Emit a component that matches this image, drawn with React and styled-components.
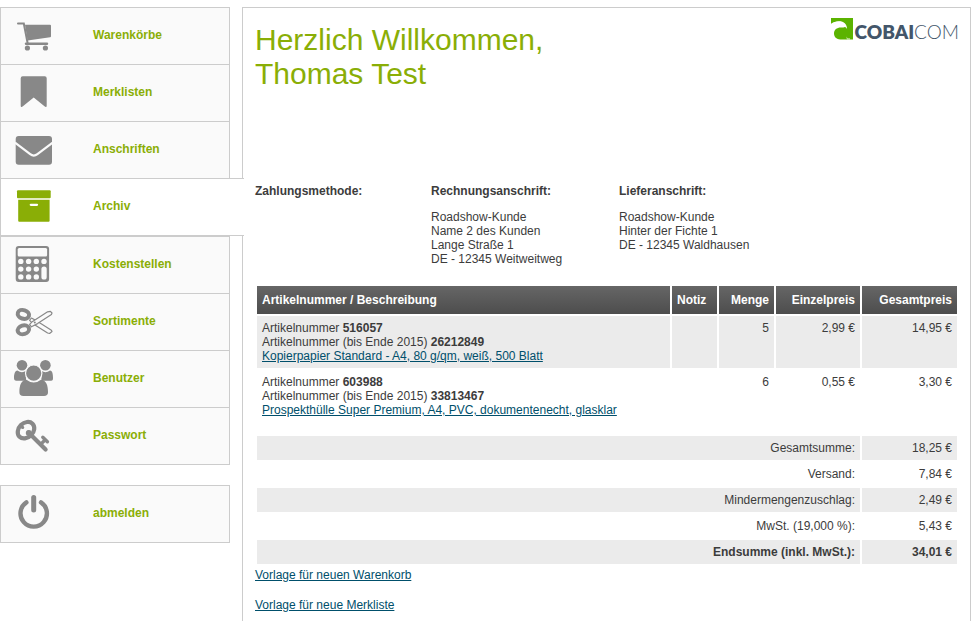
import React from "react";
import styled, { createGlobalStyle, css, ThemeProvider } from "styled-components";

const theme = {
  colors: {
    green: "#8aae06",
    icon: "#888888",
    border: "#cccccc",
    bg: "#ffffff",
    bgItem: "#fafafa",
    bgRow: "#ebebeb",
    text: "#3c3c3c",
    link: "#004f6b",
    logoGreen: "#5bb300",
    logoText: "#43566a"
  }
};

const GlobalStyle = createGlobalStyle`
  *,
  *::before,
  *::after {
    box-sizing: border-box;
  }

  body {
    background: #ffffff;
    color: ${theme.colors.text};
    font: 12px/14px "Liberation Sans", Arial, Helvetica, sans-serif;
    margin: 0;
  }
`;

const Page = styled.div`
  display: flex;
  gap: 12px;
  min-height: 100vh;
  padding: 7px 8px 0 0;
`;

const Sidebar = styled.nav`
  flex: 0 0 230px;
`;

const NavList = styled.ul`
  list-style: none;
  margin: 0 0 20px;
  padding: 0;
`;

const NavItem = styled.li`
  &:not(:first-child) {
    margin-top: ${({ $afterActive }) => ($afterActive ? "0" : "-1px")};
  }
`;

const NavLink = styled.a`
  align-items: center;
  background: ${({ theme }) => theme.colors.bgItem};
  border: 1px solid ${({ theme }) => theme.colors.border};
  color: ${({ theme }) => theme.colors.green};
  display: flex;
  font-weight: bold;
  gap: 40px;
  padding: 7px 12px 9px;
  text-decoration: none;

  svg {
    color: ${({ theme }) => theme.colors.icon};
    flex: none;
  }

  ${({ $active, theme }) =>
    $active &&
    css`
      background: ${theme.colors.bg};
      border-right: none;
      margin-right: -14px;
      position: relative;

      svg {
        color: ${theme.colors.green};
      }
    `}
`;

const Panel = styled.main`
  border: 1px solid ${({ theme }) => theme.colors.border};
  border-bottom: none;
  flex: 1;
  min-width: 0;
  padding: 10px 11px 9px 12px;
`;

const Header = styled.header`
  display: flex;
  justify-content: space-between;
  min-height: 166px;
`;

const Title = styled.h1`
  color: ${({ theme }) => theme.colors.green};
  font-size: 30px;
  font-weight: normal;
  line-height: 34px;
  margin: 5px 0 0;
`;

const Logo = styled.a`
  align-items: flex-start;
  align-self: flex-start;
  color: ${({ theme }) => theme.colors.logoText};
  display: flex;
  font-family: Lato, sans-serif;
  font-size: 19px;
  font-weight: 300;
  gap: 2px;
  line-height: 22px;
  text-decoration: none;

  svg {
    color: ${({ theme }) => theme.colors.logoGreen};
  }

  strong {
    font-weight: 800;
  }

  span {
    padding-top: 3px;
  }
`;

const Addresses = styled.section`
  display: grid;
  grid-template-columns: 44fr 47fr 85fr;
  min-height: 100px;
`;

const AddressTitle = styled.h2`
  font-size: 12px;
  line-height: 14px;
  margin: 0 0 12px;
`;

const AddressText = styled.address`
  font-style: normal;
`;

const Table = styled.table`
  border-collapse: separate;
  border-spacing: 2px;
  table-layout: fixed;
  width: 100%;
`;

const Col = styled.col`
  width: ${({ $width }) => $width || "auto"};
`;

const Th = styled.th`
  background: linear-gradient(#666666, #4d4d4d);
  color: #ffffff;
  padding: 7px 5px;
  text-align: ${({ $align }) => $align || "left"};
`;

const Td = styled.td`
  padding: 5px;
  text-align: ${({ $align }) => $align || "left"};
  vertical-align: top;
`;

const Tr = styled.tr`
  font-weight: ${({ $strong }) => ($strong ? "bold" : "normal")};

  ${Td} {
    background: ${({ $shaded, theme }) => ($shaded ? theme.colors.bgRow : "transparent")};
  }
`;

const Link = styled.a`
  color: ${({ theme }) => theme.colors.link};
`;

const Actions = styled.div`
  align-items: flex-start;
  display: flex;
  flex-direction: column;
  gap: 16px;
  padding-top: 2px;
`;

const Icon = ({ children }) => (
  <svg width="40" height="40" viewBox="0 0 40 40" fill="currentColor" aria-hidden="true">
    {children}
  </svg>
);

const CartIcon = () => (
  <Icon>
    <path d="M5 8.5H10.8L14.8 29" fill="none" stroke="currentColor" strokeWidth="2" strokeLinecap="round" />
    <path d="M12 9.7H37a1 1 0 0 1 1 1V21.3a1 1 0 0 1-.9 1L14.6 25.4Z" />
    <path d="M13 28.8H34" stroke="currentColor" strokeWidth="2.4" strokeLinecap="round" />
    <circle cx="14.4" cy="33" r="2.6" />
    <circle cx="32.4" cy="33" r="2.6" />
  </Icon>
);

const BookmarkIcon = () => (
  <Icon>
    <path d="M9.7 4.3H31.7a2 2 0 0 1 2 2V33.8c0 1.2-1 1.6-1.9.8L20.7 25.6 9.6 34.6c-.9.8-1.9.4-1.9-.8V6.3a2 2 0 0 1 2-2Z" />
  </Icon>
);

const EnvelopeIcon = () => (
  <Icon>
    <rect x="2.7" y="7" width="36.3" height="28.7" rx="3" />
    <path d="M2 13.6 17.2 25.2Q20.8 28 24.4 25.2L39.7 13.6" fill="none" stroke="#fafafa" strokeWidth="2.2" />
  </Icon>
);

const ArchiveIcon = () => (
  <Icon>
    <rect x="4" y="4.3" width="33.7" height="8" rx="1" />
    <path
      fillRule="evenodd"
      d="M5.2 13.8H36.6V34.7a1 1 0 0 1-1 1H6.2a1 1 0 0 1-1-1ZM17.8 17.7a1.1 1.1 0 0 0 0 2.3h6.2a1.1 1.1 0 0 0 0-2.3Z"
    />
  </Icon>
);

const CalculatorIcon = () => (
  <Icon>
    <rect x="2.7" y="2" width="33.4" height="36" rx="3" />
    <g fill="#fafafa">
      <rect x="4.7" y="4" width="29.4" height="8.4" rx="1.5" />
      {[17.4, 25.1, 32.9].map(cy => [7.8, 15.6, 23.3].map(cx => <circle key={`${cx}-${cy}`} cx={cx} cy={cy} r="2.7" />))}
      <circle cx="31" cy="17.4" r="2.7" />
      <rect x="28.4" y="22.4" width="5.3" height="13.2" rx="2.6" />
    </g>
  </Icon>
);

const ScissorsIcon = () => (
  <Icon>
    <g fill="none" stroke="currentColor">
      <g strokeWidth="1.2" strokeLinejoin="round" fill="#fafafa">
        <path d="M16.6 19.4 19.6 22.4 34.6 32 36.6 32.4 39 30.6 38.4 29.2 24.6 20.4 18.4 17Z" />
        <path d="M16.6 23.4 19.6 20.4 34.6 10.8 37.4 10.4 39 12 38.4 13.6 24.6 22.6 18.4 25.8Z" />
      </g>
      <ellipse cx="10.4" cy="13.4" rx="5.8" ry="4.3" strokeWidth="4" transform="rotate(18 10.4 13.4)" />
      <ellipse cx="10.4" cy="28.8" rx="5.8" ry="4.3" strokeWidth="4" transform="rotate(-18 10.4 28.8)" />
    </g>
    <circle cx="21.8" cy="21.4" r="1" />
  </Icon>
);

const UsersIcon = () => (
  <Icon>
    <circle cx="9" cy="7.2" r="5.3" />
    <circle cx="32.4" cy="7.2" r="5.3" />
    <path d="M4.4 12.6Q9 15.8 13 12.8V22.7H3.4C1.6 22.7 1 21.6 1 20 1 16.6 1.8 13 4.4 12.6Z" />
    <path d="M37 12.6Q32.4 15.8 28.4 12.8V22.7H38C39.8 22.7 40 21.6 40 20 40 16.6 39.6 13 37 12.6Z" />
    <path d="M13.4 21.8Q20.7 27.4 28 21.8C33.5 22 35 28 35 34.2c0 2.6-1.4 3.8-4 3.8H10.4c-2.6 0-4-1.2-4-3.8 0-6.2 1.5-12.2 7-12.4Z" />
    <circle cx="20.7" cy="15.2" r="8.2" stroke="#fafafa" strokeWidth="1.2" />
  </Icon>
);

const KeyIcon = () => (
  <Icon>
    <g fill="none" stroke="currentColor" strokeLinecap="round">
      <ellipse cx="13" cy="15.2" rx="9.2" ry="7.2" strokeWidth="4.2" transform="rotate(-45 13 15.2)" />
      <path d="M15.5 17.5 32.6 34.6" strokeWidth="4.2" />
      <path d="M27.6 29.4 32 25M29.8 22.2 34.4 26.8" strokeWidth="3.4" />
    </g>
    <circle cx="15.8" cy="18" r="3" />
    <circle cx="9.6" cy="12.4" r="1.6" />
  </Icon>
);

const PowerIcon = () => (
  <Icon>
    <g fill="none" stroke="currentColor" strokeWidth="4.4" strokeLinecap="round">
      <path d="M13.4 9.4A13.2 13.2 0 1 0 28 9.4" />
      <path d="M20.7 4.4V17" strokeWidth="5" />
    </g>
  </Icon>
);

const LogoMark = () => (
  <svg width="22" height="22" viewBox="0 0 22 22" fill="currentColor" aria-hidden="true">
    <path d="M0 0H22V21.6H11.4C5.8 21.6 3 19.2 3 15.4 3 11.6 5.8 9.4 9.8 9.4H12.2C13.8 9.4 14.6 8.8 14.4 7.8 13.8 5 10.6 3.6 7 3.6 4.2 3.6 2 4.6 0 6Z" />
    <path d="M0 6C4 2.8 11 2.4 14 5.4 15.6 7 16 9 16 11 15 9.4 13.6 8.2 11 7.8 7 7.4 4 8.6 2.6 10.6Z" fill="#ffffff" />
    <path d="M15.6 18.4C16 20 17 20.4 19 20.2V21.6H16.4C15.4 21 15.4 19.6 15.6 18.4Z" fill="#ffffff" opacity="0.6" />
  </svg>
);

const navItems = [
  { label: "Warenkörbe", Icon: CartIcon },
  { label: "Merklisten", Icon: BookmarkIcon },
  { label: "Anschriften", Icon: EnvelopeIcon },
  { label: "Archiv", Icon: ArchiveIcon, active: true },
  { label: "Kostenstellen", Icon: CalculatorIcon },
  { label: "Sortimente", Icon: ScissorsIcon },
  { label: "Benutzer", Icon: UsersIcon },
  { label: "Passwort", Icon: KeyIcon }
];

const addresses = [
  { title: "Zahlungsmethode:", lines: [] },
  {
    title: "Rechnungsanschrift:",
    lines: ["Roadshow-Kunde", "Name 2 des Kunden", "Lange Straße 1", "DE - 12345 Weitweitweg"]
  },
  { title: "Lieferanschrift:", lines: ["Roadshow-Kunde", "Hinter der Fichte 1", "DE - 12345 Waldhausen"] }
];

const articles = [
  {
    number: "516057",
    oldNumber: "26212849",
    name: "Kopierpapier Standard - A4, 80 g/qm, weiß, 500 Blatt",
    amount: 5,
    price: "2,99 €",
    total: "14,95 €"
  },
  {
    number: "603988",
    oldNumber: "33813467",
    name: "Prospekthülle Super Premium, A4, PVC, dokumentenecht, glasklar",
    amount: 6,
    price: "0,55 €",
    total: "3,30 €"
  }
];

const totals = [
  { label: "Gesamtsumme:", value: "18,25 €" },
  { label: "Versand:", value: "7,84 €" },
  { label: "Mindermengenzuschlag:", value: "2,49 €" },
  { label: "MwSt. (19,000 %):", value: "5,43 €" },
  { label: "Endsumme (inkl. MwSt.):", value: "34,01 €", strong: true }
];

const Navigation = () => (
  <Sidebar>
    <NavList>
      {navItems.map(({ label, Icon: ItemIcon, active }, i) => (
        <NavItem key={label} $afterActive={i > 0 && navItems[i - 1].active}>
          <NavLink href="#" $active={active} aria-current={active ? "page" : undefined}>
            <ItemIcon />
            {label}
          </NavLink>
        </NavItem>
      ))}
    </NavList>
    <NavList>
      <NavItem>
        <NavLink href="#">
          <PowerIcon />
          abmelden
        </NavLink>
      </NavItem>
    </NavList>
  </Sidebar>
);

const OrderTable = () => (
  <Table>
    <colgroup>
      <Col />
      <Col $width="45px" />
      <Col $width="55px" />
      <Col $width="84px" />
      <Col $width="95px" />
    </colgroup>
    <thead>
      <tr>
        <Th>Artikelnummer / Beschreibung</Th>
        <Th>Notiz</Th>
        <Th $align="right">Menge</Th>
        <Th $align="right">Einzelpreis</Th>
        <Th $align="right">Gesamtpreis</Th>
      </tr>
    </thead>
    <tbody>
      {articles.map((article, i) => (
        <Tr key={article.number} $shaded={i % 2 === 0}>
          <Td>
            Artikelnummer <b>{article.number}</b>
            <br />
            Artikelnummer (bis Ende 2015) <b>{article.oldNumber}</b>
            <br />
            <Link href="#">{article.name}</Link>
          </Td>
          <Td />
          <Td $align="right">{article.amount}</Td>
          <Td $align="right">{article.price}</Td>
          <Td $align="right">{article.total}</Td>
        </Tr>
      ))}
      <Tr>
        <Td colSpan={5} />
      </Tr>
      {totals.map(({ label, value, strong }, i) => (
        <Tr key={label} $shaded={i % 2 === 0} $strong={strong}>
          <Td colSpan={4} $align="right">
            {label}
          </Td>
          <Td $align="right">{value}</Td>
        </Tr>
      ))}
    </tbody>
  </Table>
);

const App = () => (
  <ThemeProvider theme={theme}>
    <GlobalStyle />
    <Page>
      <Navigation />
      <Panel>
        <Header>
          <Title>
            Herzlich Willkommen,
            <br />
            Thomas Test
          </Title>
          <Logo href="#">
            <LogoMark />
            <span>
              <strong>COBAI</strong>COM
            </span>
          </Logo>
        </Header>
        <Addresses>
          {addresses.map(({ title, lines }) => (
            <div key={title}>
              <AddressTitle>{title}</AddressTitle>
              <AddressText>
                {lines.map(line => (
                  <div key={line}>{line}</div>
                ))}
              </AddressText>
            </div>
          ))}
        </Addresses>
        <OrderTable />
        <Actions>
          <Link href="#">Vorlage für neuen Warenkorb</Link>
          <Link href="#">Vorlage für neue Merkliste</Link>
        </Actions>
      </Panel>
    </Page>
  </ThemeProvider>
);

export default App;
